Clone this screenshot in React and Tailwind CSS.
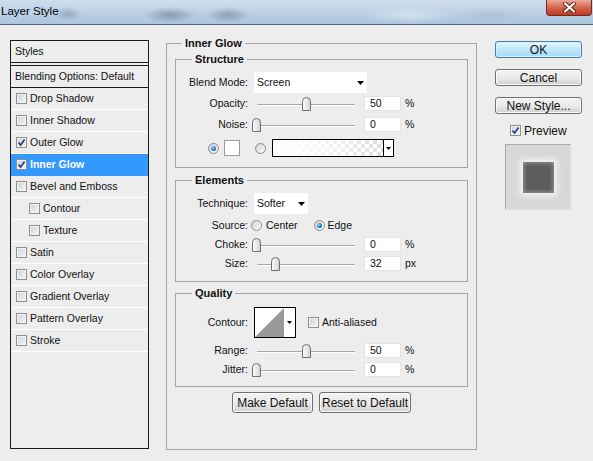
import React from 'react';

const effects = [
  { label: 'Drop Shadow' },
  { label: 'Inner Shadow' },
  { label: 'Outer Glow', checked: true },
  { label: 'Inner Glow', checked: true, active: true },
  { label: 'Bevel and Emboss' },
  { label: 'Contour', indent: true },
  { label: 'Texture', indent: true },
  { label: 'Satin' },
  { label: 'Color Overlay' },
  { label: 'Gradient Overlay' },
  { label: 'Pattern Overlay' },
  { label: 'Stroke' },
];

function Checkbox({ checked }) {
  return (
    <span className="flex h-[11px] w-[11px] shrink-0 items-center justify-center border border-[#8e8f8f] bg-linear-to-br from-[#cfd1d4] to-[#f6f6f6] shadow-[inset_0_0_0_1px_#f4f4f4]">
      {checked && (
        <svg width="9" height="9" viewBox="0 0 9 9">
          <path d="M1.5 4.5 L3.6 7 L7.6 1.5" fill="none" stroke="#34408a" strokeWidth="1.8" />
        </svg>
      )}
    </span>
  );
}

function Radio({ on }) {
  return (
    <span className="flex h-[11px] w-[11px] shrink-0 items-center justify-center rounded-full border border-[#8a8a8a] bg-linear-to-br from-[#d4d4d4] to-[#fafafa]">
      {on && (
        <span className="h-[5px] w-[5px] rounded-full bg-[radial-gradient(circle_at_35%_35%,#8fd3ff,#0b66a8_70%)]" />
      )}
    </span>
  );
}

function Arrow({ small }) {
  return small ? (
    <svg width="5" height="3" viewBox="0 0 5 3">
      <path d="M0 0H5L2.5 3Z" fill="#000" />
    </svg>
  ) : (
    <svg width="7" height="4" viewBox="0 0 7 4">
      <path d="M0 0H7L3.5 4Z" fill="#000" />
    </svg>
  );
}

function Slider({ at }) {
  return (
    <div className="relative ml-[4px] h-[16px] w-[104px]">
      <div className="absolute left-[5px] right-[1px] top-[8px] h-px bg-[#a8a8a8]" />
      <div className="absolute left-[5px] right-[1px] top-[9px] h-px bg-white" />
      <svg className="absolute top-[1px]" style={{ left: at }} width="9" height="14" viewBox="0 0 9 14">
        <defs>
          <linearGradient id="knob" x1="0" x2="1" y1="0" y2="0">
            <stop offset="0" stopColor="#ffffff" />
            <stop offset="1" stopColor="#d2d2d2" />
          </linearGradient>
        </defs>
        <path d="M0.5 13.5 V4.5 Q0.5 0.5 4.5 0.5 Q8.5 0.5 8.5 4.5 V13.5 Z" fill="url(#knob)" stroke="#6f6f6f" />
      </svg>
    </div>
  );
}

function NumberBox({ value }) {
  return (
    <div className="ml-[8px] flex h-[15px] w-[37px] items-center border border-[#e3e3e3] bg-white pl-[5px]">
      {value}
    </div>
  );
}

function SliderRow({ label, at, value, unit, height = 'h-[21px]' }) {
  return (
    <div className={`flex items-center ${height}`}>
      <span className="w-[72px] text-right">{label}</span>
      <Slider at={at} />
      <NumberBox value={value} />
      <span className="ml-[4px]">{unit}</span>
    </div>
  );
}

function Group({ title, className = '', children }) {
  return (
    <fieldset className={`border border-[#a5a5a5] ${className}`}>
      <legend className="ml-[16px] px-[3px] text-[11px] font-bold leading-[13px]">{title}</legend>
      {children}
    </fieldset>
  );
}

function WinButton({ children, primary, className = '' }) {
  return (
    <div
      className={`flex items-center justify-center rounded-[3px] border text-[12px] leading-none ${
        primary
          ? 'border-[#3c7fb1] bg-linear-to-b from-[#eaf6fd] via-[#bee6fd] to-[#a7d9f5] shadow-[inset_0_0_0_1px_#d9f0fc]'
          : 'border-[#707070] bg-linear-to-b from-[#f2f2f2] via-[#ebebeb] to-[#cfcfcf] shadow-[inset_0_0_0_1px_#fbfbfb]'
      } ${className}`}
    >
      {children}
    </div>
  );
}

export default function App() {
  return (
    <div className="h-[461px] w-[593px] overflow-hidden bg-[#ededed] font-['Liberation_Sans',Arial,sans-serif] text-[10.5px] text-[#111]">
      {/* Title bar */}
      <div className="flex h-[25px] items-start justify-between border-b border-[#52667c] bg-[image:radial-gradient(ellipse_14px_7px_at_68px_14px,rgba(70,85,100,0.3),transparent),radial-gradient(ellipse_26px_8px_at_170px_15px,rgba(60,75,90,0.4),transparent),radial-gradient(ellipse_22px_8px_at_228px_15px,rgba(60,75,90,0.35),transparent),radial-gradient(ellipse_45px_9px_at_410px_15px,rgba(235,242,250,0.55),transparent),radial-gradient(ellipse_30px_8px_at_490px_15px,rgba(150,168,188,0.35),transparent),linear-gradient(to_bottom,#cfdeed,#abc4de)]">
        <span className="pl-[1px] pt-[5px] text-[11.5px] leading-[13px] text-black">Layer Style</span>
        <div className="mr-[1px] flex h-[16px] w-[46px] items-center justify-center rounded-b-[4px] border border-t-0 border-[#6d2a22] bg-linear-to-b from-[#eaa998] via-[#d4644c] to-[#c3391f]">
          <svg width="13" height="11" viewBox="0 0 13 11">
            <path d="M2 1.5 L11 9.5 M11 1.5 L2 9.5" stroke="#5a2018" strokeWidth="4" strokeLinecap="round" />
            <path d="M2 1.5 L11 9.5 M11 1.5 L2 9.5" stroke="#ffffff" strokeWidth="2.2" strokeLinecap="round" />
          </svg>
        </div>
      </div>

      <div className="flex items-start">
        {/* Styles list */}
        <div className="ml-[10px] mt-[15px] h-[409px] w-[139px] border border-[#1a1a1a]">
          <div className="flex h-[22px] items-center border-b border-[#1a1a1a] pl-[4px]">Styles</div>
          <div className="mt-[2px] flex h-[23px] items-center border-y border-[#1a1a1a] pl-[4px]">
            Blending Options: Default
          </div>
          {effects.map((e) => (
            <div
              key={e.label}
              className={`flex h-[22px] items-center border-b ${
                e.active ? 'border-[#3399ff] bg-[#3399ff] font-bold text-white' : 'border-white'
              } ${e.indent ? 'pl-[18px]' : 'pl-[5px]'}`}
            >
              <Checkbox checked={e.checked} />
              <span className="ml-[3px]">{e.label}</span>
            </div>
          ))}
        </div>

        {/* Settings */}
        <fieldset className="ml-[17px] mt-[12px] w-[311px] border border-[#a5a5a5]">
          <legend className="ml-[15px] px-[3px] text-[11px] font-bold leading-[13px]">Inner Glow</legend>
          <div className="px-[8px] pb-[36px]">
            <Group title="Structure" className="mt-[3px] pb-[9px]">
              <div className="mt-[6px] flex h-[21px] items-center">
                <span className="w-[72px] text-right">Blend Mode:</span>
                <div className="ml-[6px] flex h-[21px] w-[113px] items-center justify-between bg-white pl-[3px] pr-[3px]">
                  <span>Screen</span>
                  <Arrow />
                </div>
              </div>
              <SliderRow label="Opacity:" at={50} value="50" unit="%" />
              <SliderRow label="Noise:" at={0} value="0" unit="%" />
              <div className="mt-[3px] flex h-[20px] items-center pl-[32px]">
                <Radio on />
                <div className="ml-[5px] h-[16px] w-[16px] border border-[#9c9c9c] bg-white" />
                <span className="ml-[15px]">
                  <Radio />
                </span>
                <div className="ml-[6px] flex h-[18px] w-[122px] border border-black">
                  <div className="flex-1 bg-[image:repeating-conic-gradient(#dedede_0_25%,#ffffff_0_50%)] bg-[length:8px_8px]">
                    <div className="h-full w-full bg-linear-to-r from-white via-white/70 to-transparent" />
                  </div>
                  <div className="flex w-[10px] items-center justify-center border-l border-black bg-white">
                    <Arrow small />
                  </div>
                </div>
              </div>
            </Group>

            <Group title="Elements" className="mt-[6px] pb-[8px]">
              <div className="mt-[6px] flex h-[21px] items-center">
                <span className="w-[72px] text-right">Technique:</span>
                <div className="ml-[6px] flex h-[21px] w-[54px] items-center justify-between bg-white pl-[3px] pr-[3px]">
                  <span>Softer</span>
                  <Arrow />
                </div>
              </div>
              <div className="mt-[2px] flex h-[19px] items-center">
                <span className="w-[72px] text-right">Source:</span>
                <span className="ml-[3px]">
                  <Radio />
                </span>
                <span className="ml-[4px]">Center</span>
                <span className="ml-[16px]">
                  <Radio on />
                </span>
                <span className="ml-[3px]">Edge</span>
              </div>
              <SliderRow label="Choke:" at={0} value="0" unit="%" height="h-[19px]" />
              <SliderRow label="Size:" at={19} value="32" unit="px" height="h-[19px]" />
            </Group>

            <Group title="Quality" className="mt-[5px] pb-[7px]">
              <div className="mt-[7px] flex h-[31px] items-center">
                <span className="w-[72px] text-right">Contour:</span>
                <div className="ml-[6px] flex h-[31px] w-[42px] border border-black bg-white">
                  <svg width="29" height="29" viewBox="0 0 29 29">
                    <path d="M0 29 L29 0 L29 29 Z" fill="#999999" />
                  </svg>
                  <div className="flex flex-1 items-center justify-center">
                    <Arrow small />
                  </div>
                </div>
                <span className="ml-[12px]">
                  <Checkbox />
                </span>
                <span className="ml-[3px]">Anti-aliased</span>
              </div>
              <SliderRow label="Range:" at={50} value="50" unit="%" height="mt-[3px] h-[19px]" />
              <SliderRow label="Jitter:" at={0} value="0" unit="%" height="h-[19px]" />
            </Group>

            <div className="mt-[5px] flex justify-center gap-[6px]">
              <WinButton className="h-[21px] w-[81px] text-[10.5px]">Make Default</WinButton>
              <WinButton className="h-[21px] w-[92px] text-[10.5px]">Reset to Default</WinButton>
            </div>
          </div>
        </fieldset>

        {/* Buttons & preview */}
        <div className="ml-[18px] mt-[16px] flex w-[87px] flex-col">
          <WinButton primary className="h-[17px]">OK</WinButton>
          <WinButton className="mt-[11px] h-[17px]">Cancel</WinButton>
          <WinButton className="mt-[11px] h-[17px]">New Style...</WinButton>
          <div className="mt-[9px] flex h-[15px] items-center pl-[15px] text-[12px]">
            <Checkbox checked />
            <span className="ml-[3px]">Preview</span>
          </div>
          <div className="ml-[10px] mt-[6px] flex h-[66px] w-[66px] items-center justify-center border border-[#a9a9a9] border-b-[#e2e2e2] border-r-[#e2e2e2] bg-[#d8d8d8]">
            <div className="h-[31px] w-[31px] bg-[#5c5c5c] shadow-[0_0_6px_3px_#f2f2f2,inset_0_0_4px_1px_rgba(255,255,255,0.35)]" />
          </div>
        </div>
      </div>
    </div>
  );
}
